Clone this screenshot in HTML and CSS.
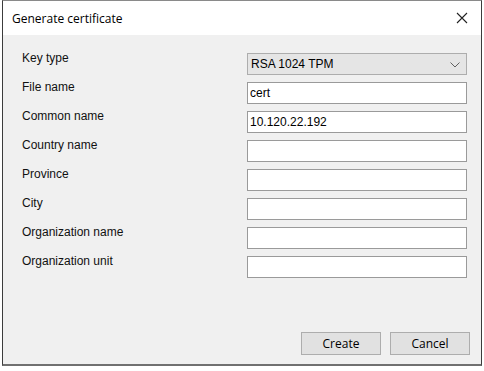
FILE: index.html
```html
<!DOCTYPE html>
<html lang="en">
<head>
    <meta charset="UTF-8">
    <title>Generate certificate</title>
    <link rel="stylesheet" href="styles.css">
</head>
<body>
    <div class="window">
        <div class="titlebar">
            <span class="title">Generate certificate</span>
            <span class="close">
                <svg width="12" height="12" viewBox="0 0 12 12"><path d="M1 1L11 11M11 1L1 11" stroke="#222" stroke-width="1.1" fill="none"/></svg>
            </span>
        </div>
        <div class="content">
            <div class="form">
                <label>Key type</label>
                <div class="combo">
                    <span>RSA 1024 TPM</span>
                    <svg width="10" height="6" viewBox="0 0 10 6"><path d="M0.5 0.5L5 5L9.5 0.5" stroke="#606060" stroke-width="1" fill="none"/></svg>
                </div>
                <label>File name</label>
                <input type="text" value="cert">
                <label>Common name</label>
                <input type="text" value="10.120.22.192">
                <label>Country name</label>
                <input type="text">
                <label>Province</label>
                <input type="text">
                <label>City</label>
                <input type="text">
                <label>Organization name</label>
                <input type="text">
                <label>Organization unit</label>
                <input type="text">
            </div>
            <div class="buttons">
                <button>Create</button>
                <button>Cancel</button>
            </div>
        </div>
    </div>
</body>
</html>
```

FILE: styles.css
```css
* {
    margin: 0;
    padding: 0;
    box-sizing: border-box;
}

body {
    background: #ffffff;
    font-family: 'Liberation Sans', Arial, sans-serif;
    font-size: 12px;
    color: #000;
}

.window {
    margin-left: 2px;
    width: 480px;
    height: 366px;
    border: 1px solid #8a8a8a;
    border-left-color: #3c3c3c;
    border-right-color: #3c3c3c;
    border-bottom: 2px solid #707070;
    display: flex;
    flex-direction: column;
    background: #f0f0f0;
}

.titlebar {
    height: 34px;
    background: #fff;
    display: flex;
    align-items: center;
    justify-content: space-between;
    padding: 0 12px 0 9px;
}

.title {
    font-family: 'Open Sans', 'Noto Sans', sans-serif;
    font-size: 12px;
    color: #000;
}

.close {
    display: flex;
    margin-right: 1px;
}

.content {
    flex: 1;
    display: flex;
    flex-direction: column;
    padding: 18px 11px 9px 19px;
}

.form {
    display: grid;
    grid-template-columns: 225px 220px;
    row-gap: 7px;
}

label {
    line-height: 14px;
    margin-top: -2px;
    color: #111;
}

.combo {
    height: 22px;
    background: #e5e5e5;
    border: 1px solid #adadad;
    display: flex;
    align-items: center;
    justify-content: space-between;
    padding: 0 6px 0 3px;
}

.combo svg {
    margin-top: 1px;
}

input {
    height: 22px;
    width: 220px;
    border: 1px solid #9a9a9a;
    background: #fff;
    font-family: 'Liberation Sans', Arial, sans-serif;
    font-size: 12px;
    color: #000;
    padding: 0 2px;
    outline: none;
}

.buttons {
    margin-top: auto;
    display: flex;
    justify-content: flex-end;
    gap: 9px;
}

button {
    width: 80px;
    height: 23px;
    background: #e1e1e1;
    border: 1px solid #adadad;
    font-family: 'Open Sans', 'Noto Sans', sans-serif;
    font-size: 12px;
    color: #000;
}
```
